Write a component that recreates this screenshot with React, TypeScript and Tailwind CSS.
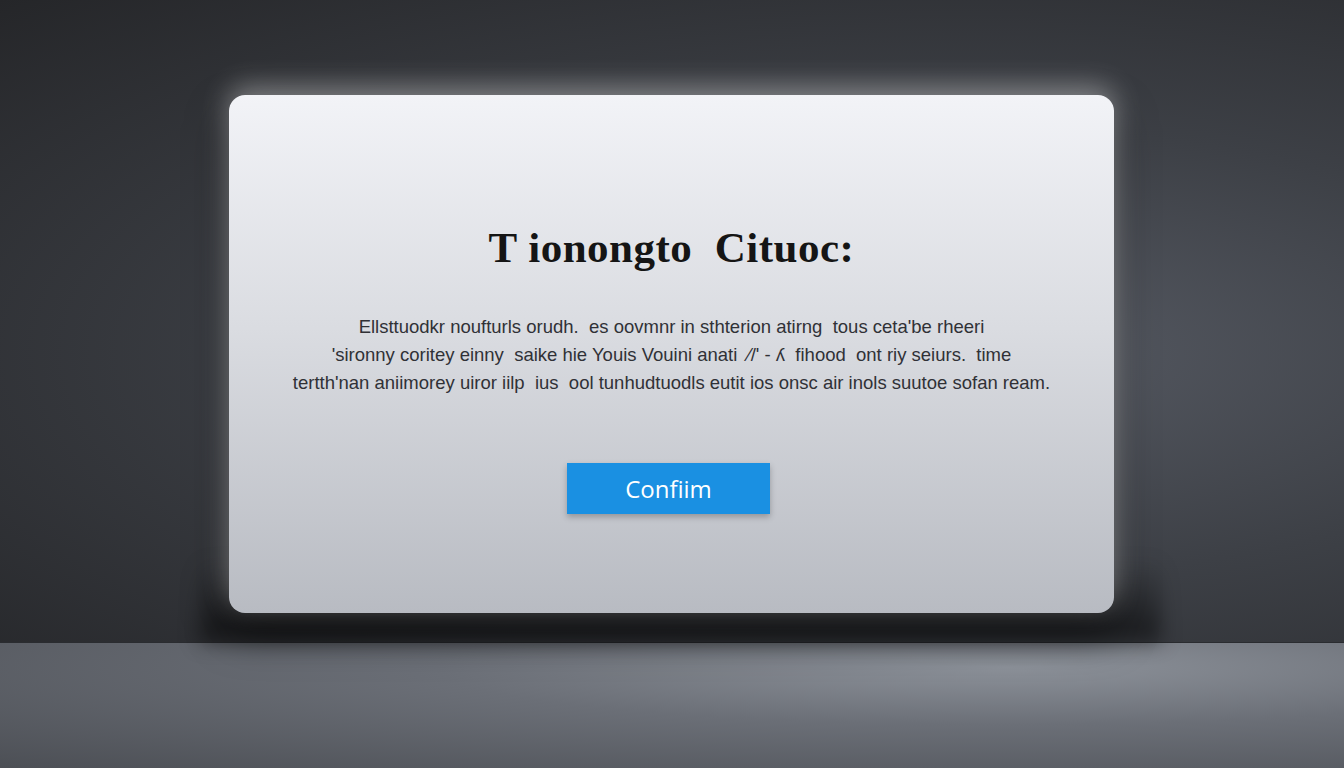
import React from "react";

export default function App() {
  return (
    <div className="w-[1344px] h-[768px] overflow-hidden flex flex-col bg-[#34363b] font-['Liberation_Sans',sans-serif]">
      {/* wall */}
      <div className="relative h-[642px] shrink-0 pt-[95px] pl-[229px] bg-[radial-gradient(ellipse_at_72%_55%,#565a63_0%,#3d4046_45%,#252629_100%)]">
        {/* shadow cast beneath the panel */}
        <div className="absolute left-[200px] top-[560px] w-[960px] h-[82px] bg-[linear-gradient(to_bottom,rgba(0,0,0,0),rgba(0,0,0,0.55))] blur-[10px]" />
        <div className="relative w-[885px] h-[518px] rounded-[16px] bg-[linear-gradient(to_bottom,#f2f3f7_0%,#dadce1_45%,#b8bbc2_100%)] shadow-[0_-8px_28px_rgba(255,255,255,0.4),0_20px_40px_rgba(0,0,0,0.5)] flex flex-col items-center">
          <h1 className="mt-[128px] text-[43px] leading-[50px] text-[#151515] font-['Liberation_Serif',serif] font-bold tracking-[0.5px] whitespace-pre">
            T ionongto{"  "}Cituoc:
          </h1>
          <div className="mt-[40px] flex flex-col items-center text-[18.5px] leading-[28px] text-[#303136] whitespace-pre">
            <p>Ellsttuodkr noufturls orudh.  es oovmnr in sthterion atirng  tous ceta'be rheeri</p>
            <p>'sironny coritey einny  saike hie Youis Vouini anati  ⁄/' - ʎ  fihood  ont riy seiurs.  time</p>
            <p>tertth'nan aniimorey uiror iilp  ius  ool tunhudtuodls eutit ios onsc air inols suutoe sofan ream.</p>
          </div>
          <button className="mt-[66px] -ml-[6px] w-[203px] h-[51px] bg-[#1a90e2] text-white text-[24px] font-['Open_Sans',sans-serif] shadow-[0_3px_6px_rgba(0,0,0,0.25)]">
            Confiim
          </button>
        </div>
      </div>
      {/* floor */}
      <div className="flex-1 bg-[radial-gradient(ellipse_at_75%_20%,#8c9199_0%,#6b6f77_40%,#4c4f55_100%)] border-t border-[#2a2c30]" />
    </div>
  );
}
